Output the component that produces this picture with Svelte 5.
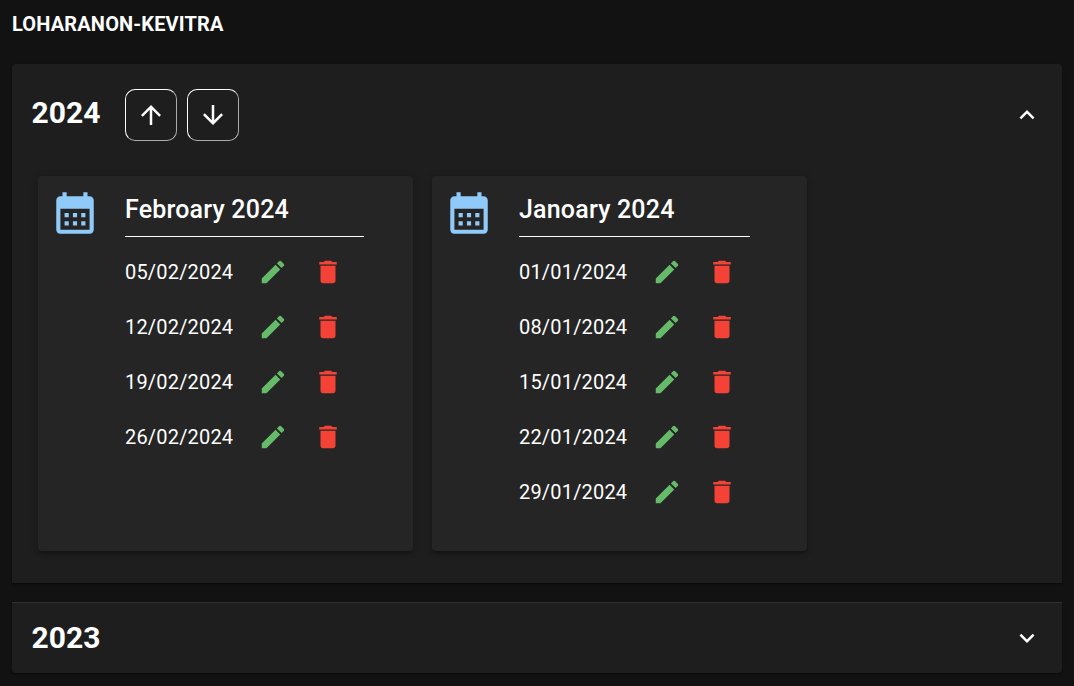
<script>
  const months = [
    { name: 'Febroary 2024', line: 239, dates: ['05/02/2024', '12/02/2024', '19/02/2024', '26/02/2024'] },
    { name: 'Janoary 2024', line: 231, dates: ['01/01/2024', '08/01/2024', '15/01/2024', '22/01/2024', '29/01/2024'] },
  ];
  const icons = {
    up: 'm4 12 1.41 1.41L11 7.83V20h2V7.83l5.58 5.59L20 12l-8-8-8 8z',
    down: 'm20 12-1.41-1.41L13 16.17V4h-2v12.17l-5.58-5.59L4 12l8 8 8-8z',
    more: 'M16.59 8.59 12 13.17 7.41 8.59 6 10l6 6 6-6z',
    calendar: 'M19 4h-1V2h-2v2H8V2H6v2H5c-1.11 0-1.99.9-1.99 2L3 20c0 1.1.89 2 2 2h14c1.1 0 2-.9 2-2V6c0-1.1-.9-2-2-2zm0 16H5V10h14v10zM9 14H7v-2h2v2zm4 0h-2v-2h2v2zm4 0h-2v-2h2v2zm-8 4H7v-2h2v2zm4 0h-2v-2h2v2zm4 0h-2v-2h2v2z',
    edit: 'M3 17.25V21h3.75L17.81 9.94l-3.75-3.75L3 17.25zM20.71 7.04c.39-.39.39-1.02 0-1.41l-2.34-2.34a.9959.9959 0 0 0-1.41 0l-1.83 1.83 3.75 3.75 1.83-1.83z',
    trash: 'M6 19c0 1.1.9 2 2 2h8c1.1 0 2-.9 2-2V7H6v12zM19 4h-3.5l-1-1h-5l-1 1H5v2h14V4z',
  };
</script>

{#snippet icon(name)}
  <svg class="icon {name}" viewBox="0 0 24 24" aria-hidden="true"><path d={icons[name]} /></svg>
{/snippet}

<main>
  <h1>LOHARANON-KEVITRA</h1>

  <section class="panel open">
    <header>
      <span class="year">2024</span>
      <button aria-label="Ascending">{@render icon('up')}</button>
      <button aria-label="Descending">{@render icon('down')}</button>
      <span class="toggle flipped">{@render icon('more')}</span>
    </header>
    <div class="cards">
      {#each months as month}
        <article>
          {@render icon('calendar')}
          <div class="body">
            <h2 style="width: {month.line}px">{month.name}</h2>
            <ul>
              {#each month.dates as date}
                <li>
                  <span class="date">{date}</span>
                  {@render icon('edit')}
                  {@render icon('trash')}
                </li>
              {/each}
            </ul>
          </div>
        </article>
      {/each}
    </div>
  </section>

  <section class="panel closed">
    <header>
      <span class="year">2023</span>
      <span class="toggle">{@render icon('more')}</span>
    </header>
  </section>
</main>

<style>
  :global(body) {
    margin: 0;
    background: #121212;
    overflow: hidden;
  }
  main {
    box-sizing: border-box;
    height: 686px;
    padding: 0 12px;
    color: #fff;
    font-family: Roboto, sans-serif;
  }
  h1 {
    margin: 0;
    height: 64px;
    font-size: 20px;
    line-height: 48px;
    font-weight: 700;
    letter-spacing: 0.0075em;
  }
  .panel {
    box-sizing: border-box;
    background: #1e1e1e;
    box-shadow: 0 2px 1px -1px rgba(0, 0, 0, 0.2), 0 1px 1px rgba(0, 0, 0, 0.14), 0 1px 3px rgba(0, 0, 0, 0.12);
  }
  .open {
    height: 519px;
    margin-bottom: 19px;
    border-radius: 4px 4px 0 0;
  }
  .closed {
    height: 71px;
    border-top: 1px solid #2f2f2f;
    border-radius: 0 0 4px 4px;
  }
  header {
    display: flex;
    align-items: center;
    gap: 10px;
    height: 70px;
    padding: 0 20px 0 19.5px;
  }
  .open header {
    height: 102px;
  }
  .year {
    width: 83.5px;
    font-size: 30px;
    line-height: 40px;
    font-weight: 700;
  }
  .open .year {
    margin-top: -4px;
  }
  button {
    box-sizing: border-box;
    width: 52px;
    height: 52px;
    padding: 10px;
    border: 1px outset #fff;
    border-radius: 10px;
    background: transparent;
    color: #fff;
  }
  .icon {
    display: block;
    flex: none;
    width: 30px;
    height: 30px;
    fill: currentColor;
  }
  .toggle {
    margin-left: auto;
  }
  .flipped {
    transform: rotate(180deg);
  }
  .cards {
    display: flex;
    gap: 19px;
    padding: 10px 26px 0;
  }
  article {
    box-sizing: border-box;
    display: flex;
    gap: 25px;
    width: 375px;
    height: 375px;
    padding: 12px;
    border-radius: 4px;
    background: #252525;
    box-shadow: 0 3px 3px -2px rgba(0, 0, 0, 0.2), 0 3px 4px rgba(0, 0, 0, 0.14), 0 1px 8px rgba(0, 0, 0, 0.12);
  }
  .icon.calendar {
    width: 50px;
    height: 50px;
    color: #90caf9;
  }
  h2 {
    box-sizing: border-box;
    height: 49px;
    margin: 0;
    border-bottom: 1px solid #fff;
    font-size: 25px;
    line-height: 44px;
    font-weight: 500;
    letter-spacing: 0.0075em;
  }
  ul {
    margin: 0;
    padding: 7px 0 0;
    list-style: none;
  }
  li {
    display: flex;
    align-items: center;
    gap: 25px;
    height: 55px;
  }
  .date {
    width: 108px;
    font-size: 20px;
    line-height: 30px;
    letter-spacing: 0.00938em;
  }
  .edit {
    color: #66bb6a;
  }
  .trash {
    color: #f44336;
  }
</style>
